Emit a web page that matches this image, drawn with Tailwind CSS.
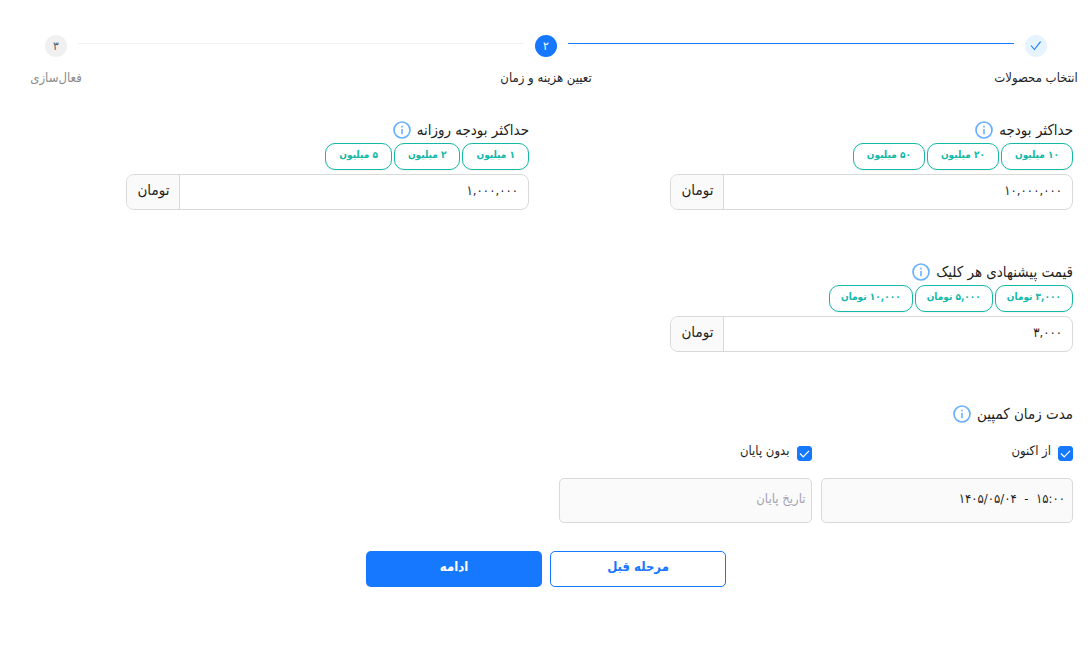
<!DOCTYPE html>
<html lang="fa" dir="rtl">
<head>
    <meta charset="UTF-8">
    <title>تعیین هزینه و زمان</title>
    <meta name="viewport" content="width=device-width, initial-scale=1.0"/>
    <script src="https://cdn.jsdelivr.net/npm/@tailwindcss/browser@4"></script>
</head>
<body class="bg-white text-[#1f1f1f] text-[13px] font-['DejaVu_Sans_Condensed','DejaVu_Sans',sans-serif]">
<svg class="hidden">
    <symbol id="info" viewBox="0 0 18 18">
        <circle cx="9" cy="9" r="8" fill="none" stroke="#69b1ff" stroke-width="1.7"/>
        <path d="M9 8v5.2M9 4.8v1.6" fill="none" stroke="#69b1ff" stroke-width="1.6"/>
    </symbol>
</svg>

<!-- steps -->
<ol class="flex items-start pt-[35px] pl-1">
    <li class="w-[104px] shrink-0 flex flex-col items-center gap-2.5">
        <span class="size-[22px] rounded-full bg-[#e6f4ff] flex items-center justify-center">
            <svg class="size-3" viewBox="0 0 12 12" fill="none" stroke="#1677ff" stroke-width="1.1"><path d="M1 5.5l3.4 4L10.6 1.6"/></svg>
        </span>
        <span class="leading-[22px] whitespace-nowrap">انتخاب محصولات</span>
    </li>
    <li class="flex-1 h-px bg-[#1677ff] mt-2 -mx-[30px]" aria-hidden="true"></li>
    <li class="w-[104px] shrink-0 flex flex-col items-center gap-2.5" aria-current="step">
        <span class="size-[22px] rounded-full bg-[#1677ff] text-white text-xs leading-[22px] text-center">۲</span>
        <span class="leading-[22px] whitespace-nowrap">تعیین هزینه و زمان</span>
    </li>
    <li class="flex-1 h-px bg-[#f0f0f0] mt-2 -mx-[30px]" aria-hidden="true"></li>
    <li class="w-[104px] shrink-0 flex flex-col items-center gap-2.5">
        <span class="size-[22px] rounded-full bg-[#f0f0f0] text-[#595959] text-xs leading-[22px] text-center">۳</span>
        <span class="leading-[22px] whitespace-nowrap text-[#8c8c8c]">فعال‌سازی</span>
    </li>
</ol>

<form>
    <div class="grid grid-cols-2 gap-y-[53px] pt-8">
        <div class="w-[74%] mr-[15px]">
            <div class="flex items-center gap-1.5 h-[18px] mb-1">
                <label for="budget" class="text-[15px] leading-[18px]">حداکثر بودجه</label>
                <svg class="size-[18px]"><use href="#info"/></svg>
            </div>
            <div class="flex gap-0.5 mb-1">
                <button type="button" class="h-[27px] px-[13px] pb-1 rounded-[10px] border border-[#13b8a6] text-[#13b8a6] text-[10px] font-bold shadow-xs whitespace-nowrap">۱۰ میلیون</button>
                <button type="button" class="h-[27px] px-[13px] pb-1 rounded-[10px] border border-[#13b8a6] text-[#13b8a6] text-[10px] font-bold shadow-xs whitespace-nowrap">۲۰ میلیون</button>
                <button type="button" class="h-[27px] px-[13px] pb-1 rounded-[10px] border border-[#13b8a6] text-[#13b8a6] text-[10px] font-bold shadow-xs whitespace-nowrap">۵۰ میلیون</button>
            </div>
            <div class="flex h-9 rounded-lg border border-[#d9d9d9] overflow-hidden">
                <input id="budget" dir="ltr" type="text" value="۱۰,۰۰۰,۰۰۰" class="flex-1 min-w-0 px-2.5 pb-0.5 text-right outline-0">
                <span class="w-[53px] bg-[#fafafa] border-r border-[#d9d9d9] text-[15px] leading-[30px] text-center">تومان</span>
            </div>
        </div>

        <div class="w-[74%] mr-[15px]">
            <div class="flex items-center gap-1.5 h-[18px] mb-1">
                <label for="dailyBudget" class="text-[15px] leading-[18px]">حداکثر بودجه روزانه</label>
                <svg class="size-[18px]"><use href="#info"/></svg>
            </div>
            <div class="flex gap-0.5 mb-1">
                <button type="button" class="h-[27px] px-[13px] pb-1 rounded-[10px] border border-[#13b8a6] text-[#13b8a6] text-[10px] font-bold shadow-xs whitespace-nowrap">۱ میلیون</button>
                <button type="button" class="h-[27px] px-[13px] pb-1 rounded-[10px] border border-[#13b8a6] text-[#13b8a6] text-[10px] font-bold shadow-xs whitespace-nowrap">۲ میلیون</button>
                <button type="button" class="h-[27px] px-[13px] pb-1 rounded-[10px] border border-[#13b8a6] text-[#13b8a6] text-[10px] font-bold shadow-xs whitespace-nowrap">۵ میلیون</button>
            </div>
            <div class="flex h-9 rounded-lg border border-[#d9d9d9] overflow-hidden">
                <input id="dailyBudget" dir="ltr" type="text" value="۱,۰۰۰,۰۰۰" class="flex-1 min-w-0 px-2.5 pb-0.5 text-right outline-0">
                <span class="w-[53px] bg-[#fafafa] border-r border-[#d9d9d9] text-[15px] leading-[30px] text-center">تومان</span>
            </div>
        </div>

        <div class="w-[74%] mr-[15px]">
            <div class="flex items-center gap-1.5 h-[18px] mb-1">
                <label for="clickPrice" class="text-[15px] leading-[18px]">قیمت پیشنهادی هر کلیک</label>
                <svg class="size-[18px]"><use href="#info"/></svg>
            </div>
            <div class="flex gap-0.5 mb-1">
                <button type="button" class="h-[27px] px-[11px] pb-1 rounded-[10px] border border-[#13b8a6] text-[#13b8a6] text-[10px] font-bold shadow-xs whitespace-nowrap">۳,۰۰۰ تومان</button>
                <button type="button" class="h-[27px] px-[11px] pb-1 rounded-[10px] border border-[#13b8a6] text-[#13b8a6] text-[10px] font-bold shadow-xs whitespace-nowrap">۵,۰۰۰ تومان</button>
                <button type="button" class="h-[27px] px-[11px] pb-1 rounded-[10px] border border-[#13b8a6] text-[#13b8a6] text-[10px] font-bold shadow-xs whitespace-nowrap">۱۰,۰۰۰ تومان</button>
            </div>
            <div class="flex h-9 rounded-lg border border-[#d9d9d9] overflow-hidden">
                <input id="clickPrice" dir="ltr" type="text" value="۳,۰۰۰" class="flex-1 min-w-0 px-2.5 pb-0.5 text-right outline-0">
                <span class="w-[53px] bg-[#fafafa] border-r border-[#d9d9d9] text-[15px] leading-[30px] text-center">تومان</span>
            </div>
        </div>
    </div>

    <!-- campaign duration -->
    <div class="px-[15px] pt-[53px]">
        <div class="flex items-center gap-1.5 h-[18px]">
            <h3 class="text-[15px] leading-[18px]">مدت زمان کمپین</h3>
            <svg class="size-[18px]"><use href="#info"/></svg>
        </div>
        <div class="grid grid-cols-2 gap-[9px] max-w-[514px] mt-[17px]">
            <div>
                <label class="flex items-center gap-[7px] h-[22px]">
                    <span class="grid mt-1">
                        <input type="checkbox" checked class="col-start-1 row-start-1 appearance-none size-[15px] rounded-[3px] border border-[#d9d9d9] checked:border-[#1677ff] checked:bg-[#1677ff]">
                        <svg class="col-start-1 row-start-1 size-[15px] pointer-events-none" viewBox="0 0 15 15" fill="none" stroke="#fff" stroke-width="1.2"><path d="M3 7.5l3.2 3.3L12 4.8"/></svg>
                    </span>
                    <span class="leading-5">از اکنون</span>
                </label>
                <input dir="ltr" type="text" value="۱۴۰۵/۰۵/۰۴  -  ۱۵:۰۰" disabled aria-label="تاریخ شروع" class="mt-4 w-full h-[45px] px-[7px] pb-1 rounded-[5px] border border-[#d9d9d9] bg-[#fafafa] text-right">
            </div>
            <div>
                <label class="flex items-center gap-[7px] h-[22px]">
                    <span class="grid mt-1">
                        <input type="checkbox" checked class="col-start-1 row-start-1 appearance-none size-[15px] rounded-[3px] border border-[#d9d9d9] checked:border-[#1677ff] checked:bg-[#1677ff]">
                        <svg class="col-start-1 row-start-1 size-[15px] pointer-events-none" viewBox="0 0 15 15" fill="none" stroke="#fff" stroke-width="1.2"><path d="M3 7.5l3.2 3.3L12 4.8"/></svg>
                    </span>
                    <span class="leading-5">بدون پایان</span>
                </label>
                <input type="text" placeholder="تاریخ پایان" disabled aria-label="تاریخ پایان" class="mt-4 w-full h-[45px] px-[5px] pb-1 rounded-[5px] border border-[#d9d9d9] bg-[#fafafa] placeholder:text-[#a3a3b3]">
            </div>
        </div>
    </div>

    <div class="flex justify-center gap-2 mt-7 pl-1">
        <button type="button" class="w-44 h-9 pb-1 rounded-[5px] border border-[#1677ff] text-[#1677ff] bg-white font-bold shadow-xs">مرحله قبل</button>
        <button type="submit" class="w-44 h-9 pb-1 rounded-[5px] bg-[#1677ff] text-white font-bold shadow-xs">ادامه</button>
    </div>
</form>
</body>
</html>
